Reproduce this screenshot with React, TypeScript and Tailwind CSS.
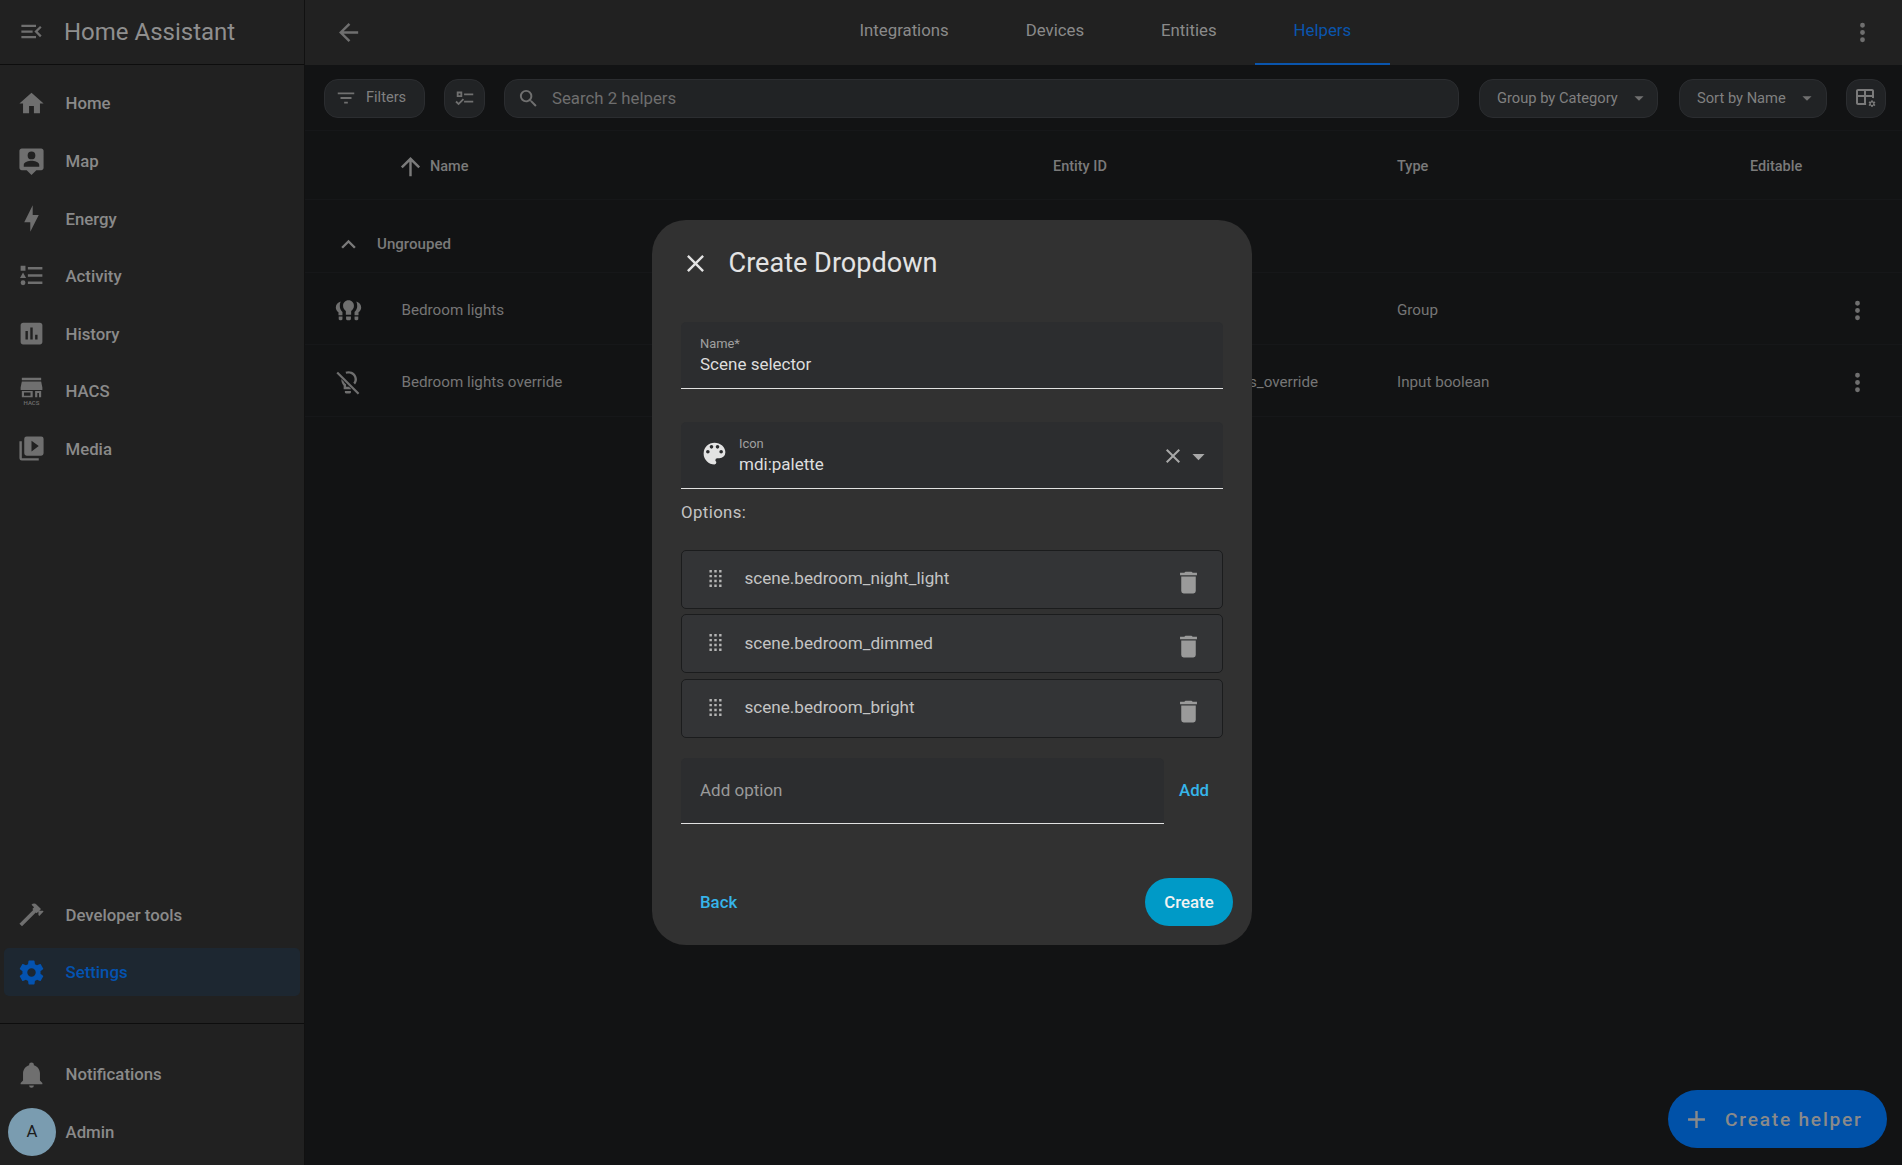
import type { ReactNode } from "react";

const P = {
  menuOpen: "M21,15.61L19.59,17L14.58,12L19.59,7L21,8.39L17.44,12L21,15.61M3,6H16V8H3V6M3,13V11H13V13H3M3,18V16H16V18H3Z",
  home: "M10,20V14H14V20H19V12H22L12,3L2,12H5V20H10Z",
  bolt: "M11 15H6L13 1V9H18L11 23V15Z",
  activity: "M5,9.5L7.5,14H2.5L5,9.5M3,4H7V8H3V4M5,20A2,2 0 0,0 7,18A2,2 0 0,0 5,16A2,2 0 0,0 3,18A2,2 0 0,0 5,20M9,5V7H21V5H9M9,19H21V17H9V19M9,13H21V11H9V13Z",
  chart: "M19 3H5C3.9 3 3 3.9 3 5V19C3 20.1 3.9 21 5 21H19C20.1 21 21 20.1 21 19V5C21 3.9 20.1 3 19 3M9 17H7V10H9V17M13 17H11V7H13V17M17 17H15V13H17V17Z",
  media: "M4,6H2V20A2,2 0 0,0 4,22H18V20H4M12,14.5V5.5L18,10M20,2H8A2,2 0 0,0 6,4V16A2,2 0 0,0 8,18H20A2,2 0 0,0 22,16V4A2,2 0 0,0 20,2Z",
  hammer: "M2 19.63L13.43 8.2L12.72 7.5L14.14 6.07L12 3.89C13.2 2.7 15.09 2.7 16.27 3.89L19.87 7.5L18.45 8.91H21.29L22 9.62L18.45 13.21L17.74 12.5V9.62L16.27 11.04L15.56 10.33L4.13 21.76L2 19.63Z",
  cog: "M12,15.5A3.5,3.5 0 0,1 8.5,12A3.5,3.5 0 0,1 12,8.5A3.5,3.5 0 0,1 15.5,12A3.5,3.5 0 0,1 12,15.5M19.43,12.97C19.47,12.65 19.5,12.33 19.5,12C19.5,11.67 19.47,11.34 19.43,11L21.54,9.37C21.73,9.22 21.78,8.95 21.66,8.73L19.66,5.27C19.54,5.05 19.27,4.96 19.05,5.05L16.56,6.05C16.04,5.66 15.5,5.32 14.87,5.07L14.5,2.42C14.46,2.18 14.25,2 14,2H10C9.75,2 9.54,2.18 9.5,2.42L9.13,5.07C8.5,5.32 7.96,5.66 7.44,6.05L4.95,5.05C4.73,4.96 4.46,5.05 4.34,5.27L2.34,8.73C2.21,8.95 2.27,9.22 2.46,9.37L4.57,11C4.53,11.34 4.5,11.67 4.5,12C4.5,12.33 4.53,12.65 4.57,12.97L2.46,14.63C2.27,14.78 2.21,15.05 2.34,15.27L4.34,18.73C4.46,18.95 4.73,19.03 4.95,18.95L7.44,17.94C7.96,18.34 8.5,18.68 9.13,18.93L9.5,21.58C9.54,21.82 9.75,22 10,22H14C14.25,22 14.46,21.82 14.5,21.58L14.87,18.93C15.5,18.67 16.04,18.34 16.56,17.94L19.05,18.95C19.27,19.03 19.54,18.95 19.66,18.73L21.66,15.27C21.78,15.05 21.73,14.78 21.54,14.63L19.43,12.97Z",
  bell: "M21,19V20H3V19L5,17V11C5,7.9 7.03,5.17 10,4.29C10,4.19 10,4.1 10,4A2,2 0 0,1 12,2A2,2 0 0,1 14,4C14,4.1 14,4.19 14,4.29C16.97,5.17 19,7.9 19,11V17L21,19M14,21A2,2 0 0,1 12,23A2,2 0 0,1 10,21",
  arrowLeft: "M20,11V13H8L13.5,18.5L12.08,19.92L4.16,12L12.08,4.08L13.5,5.5L8,11H20Z",
  dots: "M12,16A2,2 0 0,1 14,18A2,2 0 0,1 12,20A2,2 0 0,1 10,18A2,2 0 0,1 12,16M12,10A2,2 0 0,1 14,12A2,2 0 0,1 12,14A2,2 0 0,1 10,12A2,2 0 0,1 12,10M12,4A2,2 0 0,1 14,6A2,2 0 0,1 12,8A2,2 0 0,1 10,6A2,2 0 0,1 12,4Z",
  filter: "M6,13H18V11H6M3,6V8H21V6M10,18H14V16H10V18Z",
  listChecks: "M3,5H9V11H3V5M5,7V9H7V7H5M11,7H21V9H11V7M11,15H21V17H11V15M5,20L1.5,16.5L2.91,15.09L5,17.17L9.59,12.59L11,14L5,20Z",
  magnify: "M9.5,3A6.5,6.5 0 0,1 16,9.5C16,11.11 15.41,12.59 14.44,13.73L14.71,14H15.5L20.5,19L19,20.5L14,15.5V14.71L13.73,14.44C12.59,15.41 11.11,16 9.5,16A6.5,6.5 0 0,1 3,9.5A6.5,6.5 0 0,1 9.5,3M9.5,5C7,5 5,7 5,9.5C5,12 7,14 9.5,14C12,14 14,12 14,9.5C14,7 12,5 9.5,5Z",
  menuDown: "M7,10L12,15L17,10H7Z",
  arrowUp: "M13,20H11V8L5.5,13.5L4.08,12.08L12,4.16L19.92,12.08L18.5,13.5L13,8V20Z",
  chevronUp: "M7.41,15.41L12,10.83L16.59,15.41L18,14L12,8L6,14L7.41,15.41Z",
  close: "M19,6.41L17.59,5L12,10.59L6.41,5L5,6.41L10.59,12L5,17.59L6.41,19L12,13.41L17.59,19L19,17.59L13.41,12L19,6.41Z",
  palette: "M17.5,12A1.5,1.5 0 0,1 16,10.5A1.5,1.5 0 0,1 17.5,9A1.5,1.5 0 0,1 19,10.5A1.5,1.5 0 0,1 17.5,12M14.5,8A1.5,1.5 0 0,1 13,6.5A1.5,1.5 0 0,1 14.5,5A1.5,1.5 0 0,1 16,6.5A1.5,1.5 0 0,1 14.5,8M9.5,8A1.5,1.5 0 0,1 8,6.5A1.5,1.5 0 0,1 9.5,5A1.5,1.5 0 0,1 11,6.5A1.5,1.5 0 0,1 9.5,8M6.5,12A1.5,1.5 0 0,1 5,10.5A1.5,1.5 0 0,1 6.5,9A1.5,1.5 0 0,1 8,10.5A1.5,1.5 0 0,1 6.5,12M12,3A9,9 0 0,0 3,12A9,9 0 0,0 12,21A1.5,1.5 0 0,0 13.5,19.5C13.5,19.11 13.35,18.76 13.11,18.5C12.88,18.23 12.73,17.88 12.73,17.5A1.5,1.5 0 0,1 14.23,16H16A5,5 0 0,0 21,11C21,6.58 16.97,3 12,3Z",
  trash: "M19,4H15.5L14.5,3H9.5L8.5,4H5V6H19M6,19A2,2 0 0,0 8,21H16A2,2 0 0,0 18,19V7H6V19Z",
  drag: "M7,19V17H9V19H7M11,19V17H13V19H11M15,19V17H17V19H15M7,15V13H9V15H7M11,15V13H13V15H11M15,15V13H17V15H15M7,11V9H9V11H7M11,11V9H13V11H11M15,11V9H17V11H15M7,7V5H9V7H7M11,7V5H13V7H11M15,7V5H17V7H15Z",
  plus: "M19,13H13V19H11V13H5V11H11V5H13V11H19V13Z",
  mapPin: "M4 2H20C21.1 2 22 2.9 22 4V18C22 19.1 21.1 20 20 20H16L12 24L8 20H4C2.9 20 2 19.1 2 18V4C2 2.9 2.9 2 4 2ZM12 4.6A3.2 3.2 0 1 0 12 11A3.2 3.2 0 1 0 12 4.6ZM5.6 17.2H18.4V15.6C18.4 13.4 14.2 12.3 12 12.3C9.8 12.3 5.6 13.4 5.6 15.6V17.2Z",
  bulbGroup: "M12 3.5C9.2 3.5 7.5 5.6 7.5 8C7.5 10 8.5 11.4 9.8 12.4V15.5H14.2V12.4C15.5 11.4 16.5 10 16.5 8C16.5 5.6 14.8 3.5 12 3.5ZM10 17H14V18.8C14 19.5 13.6 20 13 20H11C10.4 20 10 19.5 10 18.8ZM5.5 4.5C3 5.2 1.5 7.2 1.5 9.5C1.5 11.3 2.5 12.6 3.7 13.5V16H7V13.2C5.6 12 4.8 10.2 4.8 8.3C4.8 6.9 5 5.6 5.5 4.5ZM3.9 17H7V19C7 19.6 6.6 20 6 20H4.9C4.3 20 3.9 19.6 3.9 19ZM18.5 4.5C19 5.6 19.2 6.9 19.2 8.3C19.2 10.2 18.4 12 17 13.2V16H20.3V13.5C21.5 12.6 22.5 11.3 22.5 9.5C22.5 7.2 21 5.2 18.5 4.5ZM17 17H20.1V19C20.1 19.6 19.7 20 19.1 20H18C17.4 20 17 19.6 17 19Z",
  bulbOff: "M2 4.3L3.3 3L21 20.7L19.7 22ZM9.5 3.2C10.3 2.8 11.1 2.6 12 2.6C15.9 2.6 19 5.5 19 9.4C19 11.1 18.4 12.5 17.4 13.7L16 12.3C16.6 11.5 17 10.5 17 9.4C17 6.6 14.8 4.6 12 4.6C11.4 4.6 10.8 4.7 10.3 5ZM6 9.2L8 11.2C8.3 12.1 9 12.9 10 13.4V15.5H12.3L14.2 17.4V17.5H8V14.6C6.8 13.4 6 11.4 6 9.2ZM9 19H14V20C14 20.6 13.6 21 13 21H10C9.4 21 9 20.6 9 20Z",
  hacsStore: "M4 1.5H20V3.5H4ZM4 4.5H20L21 9.5V11.5H3V9.5ZM4 12.5H13V17.5H4ZM5.8 13.6V16.4H11.2V13.6ZM15 12.5H20V17.5H18.2V14H16.8V17.5H15Z",
  tableCog: "M4 3H18C19.1 3 20 3.9 20 5V12.2C19.4 12.1 18.7 12 18 12V11H12V17H12.1C12 17.7 12 18.4 12.2 19H4C2.9 19 2 18.1 2 17V5C2 3.9 2.9 3 4 3ZM4 9H10V5H4ZM12 9H18V5H12ZM4 17H10V11H4ZM18 14.2L18.6 14.2L18.9 15.3C19.2 15.4 19.5 15.6 19.7 15.8L20.8 15.4L21.4 16.4L20.5 17.2C20.6 17.5 20.6 17.8 20.5 18.1L21.4 18.9L20.8 19.9L19.7 19.5C19.5 19.7 19.2 19.9 18.9 20L18.6 21.1H17.4L17.1 20C16.8 19.9 16.5 19.7 16.3 19.5L15.2 19.9L14.6 18.9L15.5 18.1C15.4 17.8 15.4 17.5 15.5 17.2L14.6 16.4L15.2 15.4L16.3 15.8C16.5 15.6 16.8 15.4 17.1 15.3L17.4 14.2ZM18 16.4A1.25 1.25 0 1 0 18 18.9A1.25 1.25 0 1 0 18 16.4Z",
};

function Icon({ d, className }: { d: string; className: string }) {
  return (
    <svg viewBox="0 0 24 24" className={className} fill="currentColor" fillRule="evenodd">
      <path d={d} />
    </svg>
  );
}

function HacsIcon() {
  return (
    <svg viewBox="0 0 24 24" className="h-[29px] w-[29px] shrink-0 text-[#6f6f6f]" fill="currentColor" fillRule="evenodd">
      <path d={P.hacsStore} />
      <text x="12" y="23.6" textAnchor="middle" fontSize="5" fontWeight="500" fontFamily="Roboto, sans-serif">
        HACS
      </text>
    </svg>
  );
}

function NavItem({ icon, label, active }: { icon: ReactNode; label: string; active?: boolean }) {
  return (
    <div
      className={`ml-[3.6px] mr-[4px] flex h-[48px] items-center gap-[19.5px] rounded-[5px] pl-[13.4px] text-[16.8px] font-medium ${
        active ? "bg-[#1d2731] text-[#0453b0]" : "text-[#8a8a8a]"
      }`}
    >
      {icon}
      <span className="translate-y-px">{label}</span>
    </div>
  );
}

const navTop: { d?: string; label: string }[] = [
  { d: P.home, label: "Home" },
  { d: P.mapPin, label: "Map" },
  { d: P.bolt, label: "Energy" },
  { d: P.activity, label: "Activity" },
  { d: P.chart, label: "History" },
  { label: "HACS" },
  { d: P.media, label: "Media" },
];

const navIcon = "h-[29px] w-[29px] shrink-0 text-[#6f6f6f]";

function Sidebar() {
  return (
    <aside className="flex h-full w-[305px] shrink-0 flex-col border-r border-[#111111] bg-[#212121]">
      <div className="flex h-[64.5px] shrink-0 items-center gap-[19px] border-b border-[#0d0d0d] pl-[18px] text-[#8f8f8f]">
        <Icon d={P.menuOpen} className="h-[27px] w-[27px] text-[#6f6f6f]" />
        <span className="text-[24px]">Home Assistant</span>
      </div>
      <nav className="mt-[14.5px] flex flex-col gap-[9.6px]">
        {navTop.map((n) => (
          <NavItem
            key={n.label}
            label={n.label}
            icon={n.d ? <Icon d={n.d} className={navIcon} /> : <HacsIcon />}
          />
        ))}
      </nav>
      <div className="flex-1" />
      <div className="flex flex-col gap-[9.6px]">
        <NavItem label="Developer tools" icon={<Icon d={P.hammer} className={navIcon} />} />
        <NavItem active label="Settings" icon={<Icon d={P.cog} className="h-[29px] w-[29px] shrink-0 text-[#0453b0]" />} />
      </div>
      <div className="mt-[26.5px] h-px bg-[#0d0d0d]" />
      <div className="mt-[26.5px]">
        <NavItem label="Notifications" icon={<Icon d={P.bell} className={navIcon} />} />
      </div>
      <div className="mb-[9px] mt-[10px] flex h-[48px] items-center gap-[9.5px] pl-[8px] text-[16.8px] font-medium text-[#8a8a8a]">
        <div className="flex h-[48px] w-[48px] items-center justify-center rounded-full bg-[#7a9cb0] font-normal text-[#1c1c1c]">
          A
        </div>
        <span className="translate-y-px">Admin</span>
      </div>
    </aside>
  );
}

function Tab({ label, active }: { label: string; active?: boolean }) {
  return (
    <div
      className={`flex h-full items-center border-b-2 px-[38.5px] pb-[1px] text-[16.8px] ${
        active ? "border-[#0a55ad] text-[#0a55ad]" : "border-transparent text-[#8a8a8a]"
      }`}
    >
      {label}
    </div>
  );
}

const chip = "flex h-[39px] shrink-0 items-center rounded-[14px] border border-[#2b2d30] bg-[#212325] text-[#808080]";

function Toolbar() {
  return (
    <div className="flex h-[66.5px] items-center border-b border-[#161719] pl-[19px] pr-[16px] pt-[2px]">
      <div className={`${chip} w-[101px] gap-[9px] pl-[10px] text-[14.6px]`}>
        <Icon d={P.filter} className="h-[22px] w-[22px] text-[#707070]" />
        <span>Filters</span>
      </div>
      <div className={`${chip} ml-[19px] w-[41px] justify-center`}>
        <Icon d={P.listChecks} className="h-[22px] w-[22px] text-[#707070]" />
      </div>
      <div className={`${chip} ml-[19px] min-w-0 flex-1 gap-[12px] pl-[12px] text-[16.8px]`}>
        <Icon d={P.magnify} className="h-[23px] w-[23px] text-[#707070]" />
        <span className="text-[#6e6e6e]">Search 2 helpers</span>
      </div>
      <div className={`${chip} ml-[20px] w-[179px] justify-between pl-[17px] pr-[7px] text-[14.7px]`}>
        <span>Group by Category</span>
        <Icon d={P.menuDown} className="h-[22px] w-[22px] text-[#707070]" />
      </div>
      <div className={`${chip} ml-[21px] w-[148px] justify-between pl-[17px] pr-[8px] text-[14.7px]`}>
        <span>Sort by Name</span>
        <Icon d={P.menuDown} className="h-[22px] w-[22px] text-[#707070]" />
      </div>
      <div className={`${chip} ml-[19px] w-[40px] justify-center`}>
        <Icon d={P.tableCog} className="h-[24px] w-[24px] text-[#7a7a7a]" />
      </div>
    </div>
  );
}

const cols = "grid grid-cols-[748px_344px_353px_1fr] items-center";

function HelperRow({ d, name, entity, type }: { d: string; name: string; entity: string; type: string }) {
  return (
    <div className={`${cols} h-[72px] border-b border-[#161719] pt-[3px] text-[15.2px] text-[#767676]`}>
      <div className="flex items-center gap-[38.5px] pl-[29px]">
        <Icon d={d} className="h-[29px] w-[29px] text-[#6f6f6f]" />
        <span>{name}</span>
      </div>
      <span className="whitespace-nowrap">{entity}</span>
      <span>{type}</span>
      <div className="flex justify-end pr-[30px]">
        <Icon d={P.dots} className="h-[29px] w-[29px] text-[#6f6f6f]" />
      </div>
    </div>
  );
}

function Table() {
  return (
    <div>
      <div className={`${cols} h-[69px] border-b border-[#161719] pt-[3px] text-[14.5px] font-medium text-[#7a7a7a]`}>
        <div className="flex items-center gap-[5px] pl-[91px]">
          <Icon d={P.arrowUp} className="h-[29px] w-[29px] text-[#7a7a7a]" />
          <span>Name</span>
        </div>
        <span>Entity ID</span>
        <span>Type</span>
        <span>Editable</span>
      </div>
      <div className="flex h-[73px] items-center gap-[14px] border-b border-[#161719] pl-[29px] pt-[16.5px] text-[15.1px] font-medium text-[#7a7a7a]">
        <Icon d={P.chevronUp} className="h-[29px] w-[29px] text-[#7a7a7a]" />
        <span>Ungrouped</span>
      </div>
      <HelperRow d={P.bulbGroup} name="Bedroom lights" entity="light.bedroom_lights" type="Group" />
      <HelperRow
        d={P.bulbOff}
        name="Bedroom lights override"
        entity="input_boolean.bedroom_lights_override"
        type="Input boolean"
      />
    </div>
  );
}

function OptionRow({ label }: { label: string }) {
  return (
    <div className="flex h-[59px] items-center rounded-[5px] border border-[#1b1c1d] bg-[#333436] pl-[19px] pr-[19px] text-[17.1px] text-[#c4c4c4]">
      <Icon d={P.drag} className="h-[29px] w-[29px] -translate-y-px text-[#b5b5b5]" />
      <span className="ml-[14.5px] flex-1">{label}</span>
      <Icon d={P.trash} className="h-[29px] w-[29px] translate-y-[3px] text-[#9a9a9a]" />
    </div>
  );
}

function Dialog() {
  return (
    <div className="absolute left-[652px] top-[220px] flex h-[725px] w-[600px] flex-col rounded-[34px] bg-[#313131]">
      <div className="flex h-[86px] items-center gap-[19px] pl-[28.5px] text-[#e3e3e3]">
        <Icon d={P.close} className="h-[29px] w-[29px]" />
        <span className="text-[27.1px]">Create Dropdown</span>
      </div>
      <div className="flex flex-1 flex-col px-[29px]">
        <div className="mt-[16px] flex h-[67px] flex-col rounded-t-[5px] border-b border-[#e1e1e1] bg-[#2c2d2f] pl-[19px] pt-[13px]">
          <span className="text-[12.9px] leading-[18px] text-[#a0a0a0]">Name*</span>
          <span className="text-[17px] leading-[22px] text-[#dedede]">Scene selector</span>
        </div>
        <div className="mt-[33px] flex h-[67px] items-center rounded-t-[5px] border-b border-[#e1e1e1] bg-[#2c2d2f] pl-[19px] pr-[10px]">
          <Icon d={P.palette} className="h-[29px] w-[29px] -translate-y-[2px] text-[#e3e3e3]" />
          <div className="ml-[10px] flex flex-1 flex-col">
            <span className="text-[12.9px] leading-[18px] text-[#a0a0a0]">Icon</span>
            <span className="text-[17px] leading-[22px] text-[#dedede]">mdi:palette</span>
          </div>
          <Icon d={P.close} className="h-[24px] w-[24px] translate-y-px text-[#a8a8a8]" />
          <Icon d={P.menuDown} className="-ml-px h-[29px] w-[29px] translate-y-px text-[#a8a8a8]" />
        </div>
        <div className="mt-[12px] text-[16.8px] leading-[22px] tracking-[0.4px] text-[#c4c4c4]">Options:</div>
        <div className="mt-[26.5px] flex flex-col gap-[5.5px]">
          <OptionRow label="scene.bedroom_night_light" />
          <OptionRow label="scene.bedroom_dimmed" />
          <OptionRow label="scene.bedroom_bright" />
        </div>
        <div className="mt-[20px] flex items-center">
          <div className="flex h-[66px] w-[483px] items-center rounded-t-[5px] border-b border-[#e1e1e1] bg-[#2c2d2f] pl-[19px] pt-[1px] text-[17px] text-[#9a9a9a]">
            Add option
          </div>
          <span className="ml-[15px] text-[16.8px] font-medium text-[#36b5ea]">Add</span>
        </div>
      </div>
      <div className="mb-[19px] flex items-center justify-between pl-[48px] pr-[19px] text-[16.8px] font-medium">
        <span className="translate-y-px text-[#36b5ea]">Back</span>
        <div className="flex h-[48px] w-[88px] items-center justify-center rounded-full bg-[#009ac7] pt-[1px] text-[#f2f2f2]">
          Create
        </div>
      </div>
    </div>
  );
}

export default function App() {
  return (
    <div className="relative flex h-[1165px] w-[1902px] overflow-hidden bg-[#121314] font-[Roboto,sans-serif]">
      <Sidebar />
      <main className="flex min-w-0 flex-1 flex-col">
        <header className="flex h-[64.5px] shrink-0 items-center bg-[#212121] pl-[29px] pr-[25px]">
          <Icon d={P.arrowLeft} className="h-[29px] w-[29px] text-[#6f6f6f]" />
          <div className="ml-[458px] flex h-full">
            <Tab label="Integrations" />
            <Tab label="Devices" />
            <Tab label="Entities" />
            <Tab active label="Helpers" />
          </div>
          <Icon d={P.dots} className="ml-auto h-[29px] w-[29px] text-[#6f6f6f]" />
        </header>
        <Toolbar />
        <Table />
      </main>
      <Dialog />
      <div className="absolute bottom-[17px] right-[15px] flex h-[58px] w-[219px] items-center gap-[14px] rounded-full bg-[#0051a8] pl-[14px] pt-[2px] text-[19.2px] font-medium tracking-[1.75px] text-[#8a8a8a]">
        <Icon d={P.plus} className="h-[29px] w-[29px] -translate-y-px" />
        <span>Create helper</span>
      </div>
    </div>
  );
}
